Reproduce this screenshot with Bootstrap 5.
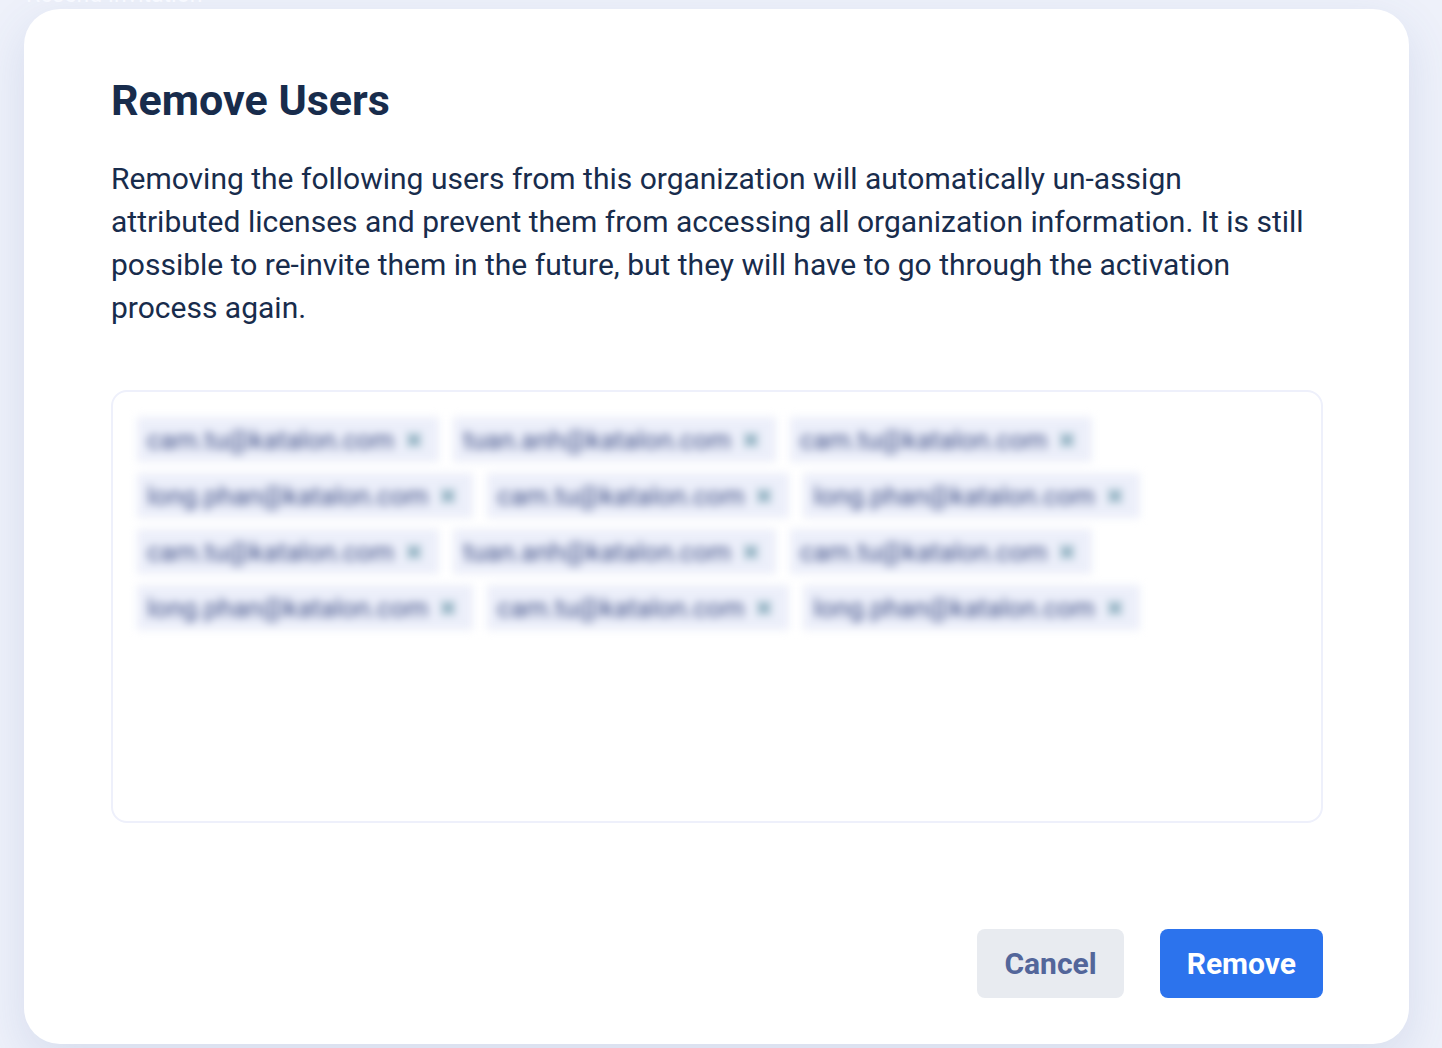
<!DOCTYPE html>
<html lang="en">
<head>
<meta charset="utf-8">
<meta name="viewport" content="width=device-width, initial-scale=1">
<title>Remove Users</title>
<link href="https://cdn.jsdelivr.net/npm/bootstrap@5.3.0/dist/css/bootstrap.min.css" rel="stylesheet">
<style>
  body {
    font-family: Roboto, "Liberation Sans", sans-serif;
    color: #182c4c;
    background: #eef1fa;
  }
  .backdrop-strip { height: 9px; padding-left: 26px; }
  .backdrop-strip a { color: #f7f9ff; font-size: 23px; line-height: 24px; margin-top: -17px; }
  .dialog-wrap { padding: 0 33px 4px 24px; }
  .dialog-panel {
    border-radius: 36px;
    padding: 64px 86px 46px 87px;
    box-shadow: 0 16px 48px rgba(70, 100, 160, .14);
  }
  .dialog-title { font-size: 43px; line-height: 54px; margin-bottom: 30px; }
  .dialog-text { font-size: 30px; line-height: 43px; margin-bottom: 61px; padding-right: 8px; }
  .user-box { min-height: 433px; border: 2px solid #eef0fb; border-radius: 16px; padding: 25px 24px; }
  .chip-list { gap: 11px 14px; filter: blur(4px); }
  .chip { height: 45px; padding: 0 17px 0 10px; gap: 12px; background: #eceffa; color: #3f4f86; font-size: 26px; line-height: 32px; }
  .chip button { color: #7ba3b4; width: 16px; height: 16px; }
  .btn-dialog {
    --bs-btn-font-size: 30px;
    --bs-btn-line-height: 45px;
    --bs-btn-padding-x: 27px;
    --bs-btn-padding-y: 12px;
    --bs-btn-border-width: 0;
    --bs-btn-border-radius: 8px;
    --bs-btn-font-weight: 700;
    line-height: 45px;
  }
  .btn-cancel { --bs-btn-color: #53669a; --bs-btn-bg: #e8ebf0; --bs-btn-hover-bg: #dde1e8; --bs-btn-hover-color: #53669a; }
  .btn-remove { --bs-btn-color: #fff; --bs-btn-bg: #2c73ed; --bs-btn-hover-bg: #1f63d8; --bs-btn-hover-color: #fff; }
  .dialog-actions { gap: 36px; margin-top: 106px; }
</style>
</head>
<body>
<div class="backdrop-strip d-flex align-items-start overflow-hidden">
  <a href="#" class="text-decoration-none">Resend Invitation</a>
</div>
<div class="dialog-wrap">
  <main class="dialog-panel bg-white" role="dialog" aria-labelledby="dialogTitle">
    <h1 class="dialog-title fw-bold" id="dialogTitle">Remove Users</h1>
    <p class="dialog-text">Removing the following users from this organization will automatically un-assign attributed licenses and prevent them from accessing all organization information. It is still possible to re-invite them in the future, but they will have to go through the activation process again.</p>
    <div class="user-box">
      <div class="chip-list d-flex flex-wrap" id="chips">
      </div>
    </div>
    <div class="dialog-actions d-flex justify-content-end">
      <button type="button" class="btn btn-dialog btn-cancel">Cancel</button>
      <button type="button" class="btn btn-dialog btn-remove">Remove</button>
    </div>
  </main>
</div>
<script src="https://cdn.jsdelivr.net/npm/bootstrap@5.3.0/dist/js/bootstrap.bundle.min.js"></script>
<script>
  const group = ["cam.tu", "tuan.anh", "cam.tu", "long.phan", "cam.tu", "long.phan"];
  document.getElementById("chips").innerHTML = [...group, ...group].map(name => `
    <div class="chip d-flex align-items-center">
      <span>${name}@katalon.com</span>
      <button type="button" class="btn p-0 border-0 d-flex" aria-label="Remove ${name}">
        <svg width="16" height="16" viewBox="0 0 16 16" fill="none" stroke="currentColor" stroke-width="4" aria-hidden="true"><path d="M2 2l12 12M14 2L2 14"/></svg>
      </button>
    </div>`).join("");
</script>
</body>
</html>
